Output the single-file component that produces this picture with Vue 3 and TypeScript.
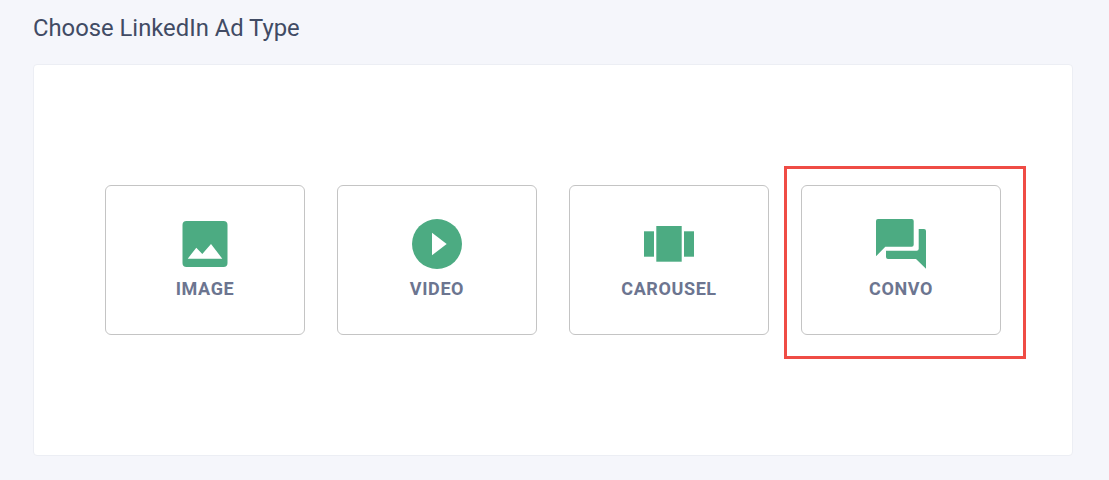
<script setup lang="ts">
const adTypes = [
  { name: 'IMAGE', icon: 'image', marked: false },
  { name: 'VIDEO', icon: 'video', marked: false },
  { name: 'CAROUSEL', icon: 'carousel', marked: false },
  { name: 'CONVO', icon: 'convo', marked: true },
]
</script>

<template>
  <div class="page">
    <h1 class="title">Choose LinkedIn Ad Type</h1>
    <div class="panel">
      <div class="types">
        <div class="typeCard" v-for="item in adTypes" :key="item.name">
          <svg class="icon" viewBox="0 0 50 50" width="50" height="50">
            <template v-if="item.icon == 'image'">
              <rect x="2.5" y="2" width="45" height="46" rx="4" fill="#4cab82" />
              <path d="M7.7 39.7 16.3 28.7 22.3 35 31 25 42.3 39.7Z" fill="#fff" />
            </template>
            <template v-else-if="item.icon == 'video'">
              <circle cx="25" cy="25" r="25" fill="#4cab82" />
              <path d="M20 13.7 34.7 25 20 36.3Z" fill="#fff" />
            </template>
            <template v-else-if="item.icon == 'carousel'">
              <rect x="0" y="12.3" width="10" height="25.4" fill="#4cab82" />
              <rect x="12.3" y="7" width="25.4" height="35.7" fill="#4cab82" />
              <rect x="40" y="12.3" width="10" height="25.4" fill="#4cab82" />
            </template>
            <template v-else>
              <path d="M2 0H35.7A2 2 0 0 1 37.7 2V25.7A2 2 0 0 1 35.7 27.7H9.3L0 37.3V2A2 2 0 0 1 2 0Z" fill="#4cab82" />
              <path d="M42.7 10H48A2 2 0 0 1 50 12V49.7L40 40H12A2 2 0 0 1 10 38V31.7H40.7A2 2 0 0 0 42.7 29.7Z" fill="#4cab82" />
            </template>
          </svg>
          <span class="label">{{ item.name }}</span>
          <div v-if="item.marked" class="marker"></div>
        </div>
      </div>
    </div>
  </div>
</template>

<style scoped>
.page {
  box-sizing: border-box;
  height: 480px;
  padding: 0 36px 24px 33px;
  display: flex;
  flex-direction: column;
  font-family: Roboto, "Liberation Sans", sans-serif;
}

.title {
  margin: 0 0 8px;
  height: 56px;
  line-height: 56px;
  font-size: 23.8px;
  font-weight: 400;
  color: #414b64;
}

.panel {
  flex: 1;
  display: flex;
  align-items: center;
  justify-content: center;
  background-color: #fff;
  border: 1px solid #eceef4;
  border-radius: 4px;
}

.types {
  display: flex;
  gap: 32px;
}

.typeCard {
  position: relative;
  box-sizing: border-box;
  width: 200px;
  height: 150px;
  display: flex;
  flex-direction: column;
  align-items: center;
  justify-content: center;
  border: 1px solid #c4c4c4;
  border-radius: 6px;
}

.icon {
  display: block;
}

.label {
  margin-top: 8px;
  line-height: 24px;
  font-size: 18px;
  font-weight: 700;
  letter-spacing: 0.6px;
  color: #6c7590;
}

.marker {
  position: absolute;
  left: -18px;
  top: -20px;
  width: 242px;
  height: 193px;
  box-sizing: border-box;
  border: 3px solid #ef4c45;
}
</style>

<style>
body {
  background-color: #f5f6fb;
}
</style>
